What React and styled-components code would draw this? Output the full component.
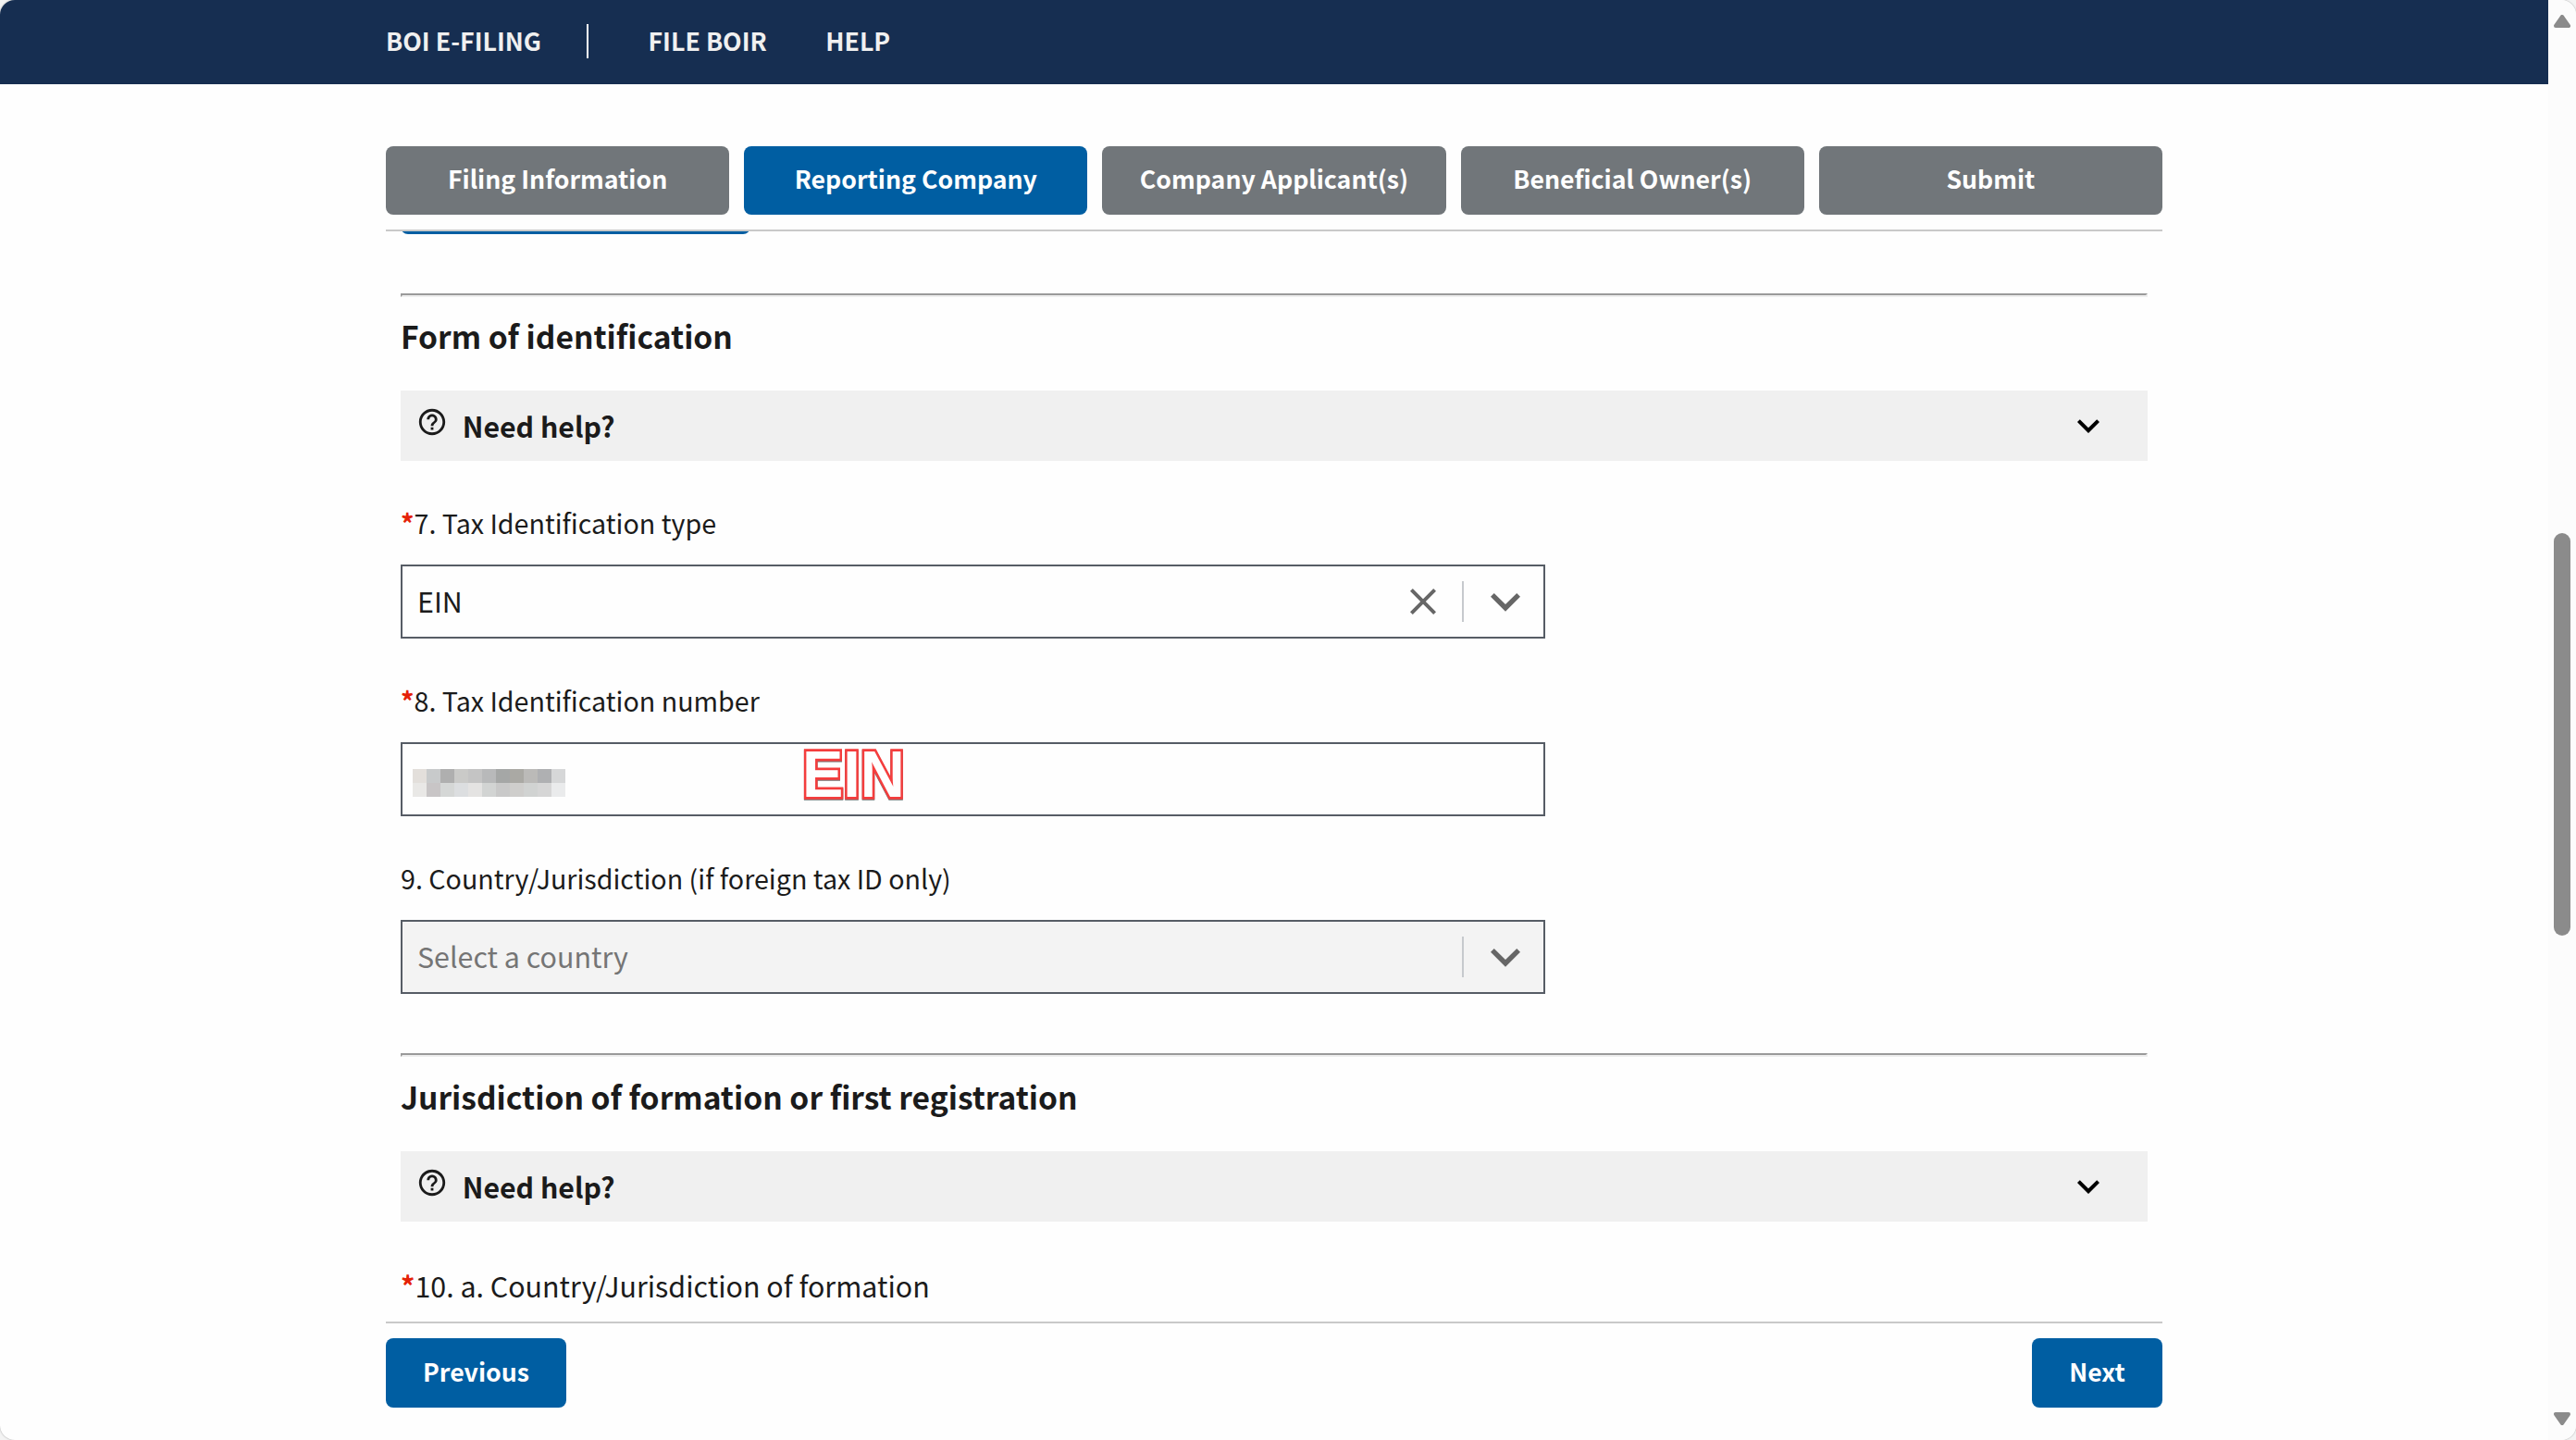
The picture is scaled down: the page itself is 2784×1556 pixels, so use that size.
import React from 'react';
import styled, { createGlobalStyle } from 'styled-components';

const GlobalStyle = createGlobalStyle`
  *, *::before, *::after { box-sizing: border-box; }
  html, body { margin: 0; padding: 0; background: #f3f3f3; overflow: hidden; }
  body {
    font-family: "Noto Sans CJK SC", "Noto Sans", sans-serif;
    color: #1b1b1b;
  }
  button { font-family: inherit; border: 0; margin: 0; padding: 0; cursor: pointer; }
`;

const Window = styled.div`
  display: flex;
  width: 100vw;
  height: 1556px;
  border-radius: 16px;
  overflow: hidden;
  background: #fefefe;
  box-shadow: 0 0 2px rgba(0, 0, 0, 0.35);
`;

const Page = styled.div`
  flex: 1;
  min-width: 0;
  display: flex;
  flex-direction: column;
`;

const Header = styled.header`
  flex: none;
  height: 91px;
  background: #162e51;
`;

const HeaderInner = styled.nav`
  width: 1920px;
  height: 100%;
  margin: 0 auto;
  display: flex;
  align-items: center;
`;

const NavLink = styled.a`
  color: #f0f0f0;
  font-size: 26.75px;
  font-weight: 700;
  line-height: 40px;
  padding-bottom: 3px;
  white-space: nowrap;
  text-decoration: none;
  & + & { margin-left: 63.4px; }
`;

const NavDivider = styled.span`
  width: 2px;
  height: 37px;
  margin: 0 64.4px 2px 49px;
  background: #fff;
`;

const Wizard = styled.div`
  flex: 1;
  min-height: 0;
  width: 1920px;
  margin: 0 auto;
  padding-top: 67px;
  display: flex;
  flex-direction: column;
`;

const Steps = styled.div`
  flex: none;
  display: grid;
  grid-template-columns: repeat(5, 1fr);
  gap: 16px;
  padding-bottom: 16px;
  border-bottom: 2px solid #c9c9c9;
`;

const Button = styled.button`
  display: flex;
  align-items: center;
  justify-content: center;
  height: ${(p) => p.$height || 75}px;
  width: ${(p) => (p.$width ? `${p.$width}px` : 'auto')};
  padding-bottom: ${(p) => (p.$height ? 5 : 3)}px;
  border-radius: 8px;
  background: ${(p) => (p.$muted ? '#71767a' : '#005ea2')};
  color: #fff;
  font-size: 26.7px;
  font-weight: 700;
  line-height: 40px;
  white-space: nowrap;
`;

const FormScroll = styled.div`
  flex: 1;
  min-height: 0;
  overflow: hidden;
  padding: 0 16px;
`;

const ScrolledButton = styled(Button)`
  margin-top: -71px;
  margin-bottom: 64px;
`;

const Rule = styled.hr`
  height: 4px;
  margin: 0;
  border: 2px solid;
  border-color: #9a9a9a #eee #eee #9a9a9a;
`;

const Heading = styled.h3`
  margin: ${(p) => (p.$lowered ? '18.9px 0 34.5px' : '17.9px 0 35.5px')};
  font-size: 33.6px;
  font-weight: 700;
  line-height: 48px;
`;

const HelpBar = styled.div`
  height: 76px;
  padding: 0 40px 0 16.7px;
  display: flex;
  align-items: center;
  background: #f0f0f0;
`;

const HelpText = styled.span`
  flex: 1;
  font-size: 30.3px;
  font-weight: 700;
  line-height: 40px;
`;

const Icon = styled.svg`
  flex: none;
  display: block;
  width: ${(p) => p.$size}px;
  height: ${(p) => p.$size}px;
  fill: ${(p) => p.$color || '#1b1b1b'};
`;

const HelpIcon = styled(Icon)`
  margin: 0 16px 8px 0;
`;

const Fields = styled.div`
  display: flex;
  flex-direction: column;
  gap: 47px;
  padding: ${(p) => p.$top}px 0 64px;
`;

const Field = styled.div`
  width: 1237px;
`;

const Label = styled.label`
  display: block;
  margin-bottom: 25px;
  font-size: ${(p) => (p.$large ? 30.4 : 28.65)}px;
  line-height: 40px;
  white-space: nowrap;
`;

const Required = styled.span`
  color: #e52207;
  font-weight: 700;
`;

const Control = styled.div`
  position: relative;
  height: 80px;
  display: flex;
  align-items: center;
  padding: 0 9px 0 16px;
  border: 2px solid #565c65;
  background: ${(p) => (p.$disabled ? '#f3f3f3' : '#fefefe')};
`;

const Value = styled.span`
  flex: 1;
  padding-bottom: 3px;
  font-size: 30.4px;
  line-height: 40px;
  color: ${(p) => (p.$placeholder ? '#757575' : '#1b1b1b')};
`;

const Separator = styled.span`
  width: 2px;
  height: 44px;
  margin: 0 13px 0 18px;
  background: #c6c9cd;
`;

const Redaction = styled.div`
  display: grid;
  grid-template-columns: repeat(11, 15px);
  grid-auto-rows: 15px;
  margin: 7px 0 0 -5px;
`;

const Tile = styled.span`
  background: ${(p) => p.$color};
`;

const Annotation = styled.span`
  position: absolute;
  left: 432.2px;
  top: -7.4px;
  font-family: "Liberation Sans", Arial, sans-serif;
  font-size: 70px;
  font-weight: 700;
  line-height: 80px;
  color: #fefefe;
  -webkit-text-stroke: 5.4px #f43d3d;
  paint-order: stroke fill;
  filter: drop-shadow(0 1px 0.5px rgba(0, 0, 0, 0.55));
  transform: scaleX(0.95);
  transform-origin: left;
`;

const Footer = styled.footer`
  flex: none;
  height: 128px;
  padding-top: 16px;
  display: flex;
  align-items: flex-start;
  justify-content: space-between;
  border-top: 2px solid #c9c9c9;
`;

const Scrollbar = styled.div`
  flex: none;
  width: 30px;
  padding: 16px 6px;
  display: flex;
  flex-direction: column;
  background: #fcfcfc;
`;

const Thumb = styled.div`
  height: 435px;
  margin: 546px 0 auto;
  border-radius: 9px;
  background: #8b8b8b;
`;

const Arrow = styled.svg`
  flex: none;
  display: block;
  width: 18px;
  height: 14px;
  fill: #8b8b8b;
  stroke: #8b8b8b;
  stroke-width: 4;
  stroke-linejoin: round;
  transform: ${(p) => (p.$down ? 'rotate(180deg)' : 'none')};
`;

const Chevron = ({ size, color }) => (
  <Icon viewBox="0 0 24 24" $size={size} $color={color}>
    <path d="M16.59 8.59 12 13.17 7.41 8.59 6 10l6 6 6-6z" />
  </Icon>
);

const Close = () => (
  <Icon viewBox="0 0 24 24" $size={48} $color="#666">
    <path d="M19 6.41 17.59 5 12 10.59 6.41 5 5 6.41 10.59 12 5 17.59 6.41 19 12 13.41 17.59 19 19 17.59 13.41 12z" />
  </Icon>
);

const NeedHelp = () => (
  <HelpBar>
    <HelpIcon viewBox="0 0 24 24" $size={34}>
      <path d="M11 18h2v-2h-2v2zm1-16C6.48 2 2 6.48 2 12s4.48 10 10 10 10-4.48 10-10S17.52 2 12 2zm0 18c-4.41 0-8-3.59-8-8s3.59-8 8-8 8 3.59 8 8-3.59 8-8 8zm0-14c-2.21 0-4 1.79-4 4h2c0-1.1.9-2 2-2s2 .9 2 2c0 2-3 1.75-3 5h2c0-2.25 3-2.5 3-5 0-2.21-1.79-4-4-4z" />
    </HelpIcon>
    <HelpText>Need help?</HelpText>
    <Chevron size={48} color="#000" />
  </HelpBar>
);

const steps = [
  'Filing Information',
  'Reporting Company',
  'Company Applicant(s)',
  'Beneficial Owner(s)',
  'Submit',
];

const tiles = [
  '#e3dfdb', '#c8cacb', '#afafaf', '#cacac8', '#c4c4c4', '#b8b9ba',
  '#a5a7a6', '#aaa9a4', '#bbbab8', '#afb0b2', '#d6d7d8',
  '#e9e8e6', '#c8c5c6', '#d5d7d6', '#dcdee0', '#e4e3e2', '#d2d4d3',
  '#c9c9c9', '#cfcecc', '#d1d3d2', '#d6d6d6', '#eaebec',
];

export default function App() {
  return (
    <>
      <GlobalStyle />
      <Window>
        <Page>
          <Header>
            <HeaderInner>
              <NavLink>BOI E-FILING</NavLink>
              <NavDivider />
              <NavLink>FILE BOIR</NavLink>
              <NavLink>HELP</NavLink>
            </HeaderInner>
          </Header>
          <Wizard>
            <Steps>
              {steps.map((step) => (
                <Button key={step} $height={74} $muted={step !== 'Reporting Company'}>
                  {step}
                </Button>
              ))}
            </Steps>
            <FormScroll>
              <ScrolledButton $height={74} $width={378} />
              <Rule />
              <Heading>Form of identification</Heading>
              <NeedHelp />
              <Fields $top={46.8}>
                <Field>
                  <Label><Required>*</Required>7. Tax Identification type</Label>
                  <Control>
                    <Value>EIN</Value>
                    <Close />
                    <Separator />
                    <Chevron size={64} color="#666" />
                  </Control>
                </Field>
                <Field>
                  <Label><Required>*</Required>8. Tax Identification number</Label>
                  <Control>
                    <Redaction>
                      {tiles.map((color, i) => <Tile key={i} $color={color} />)}
                    </Redaction>
                    <Annotation>EIN</Annotation>
                  </Control>
                </Field>
                <Field>
                  <Label>9. Country/Jurisdiction (if foreign tax ID only)</Label>
                  <Control $disabled>
                    <Value $placeholder>Select a country</Value>
                    <Separator />
                    <Chevron size={64} color="#666" />
                  </Control>
                </Field>
              </Fields>
              <Rule />
              <Heading $lowered>Jurisdiction of formation or first registration</Heading>
              <NeedHelp />
              <Fields $top={49}>
                <Label $large><Required>*</Required>10. a. Country/Jurisdiction of formation</Label>
              </Fields>
            </FormScroll>
            <Footer>
              <Button $width={195}>Previous</Button>
              <Button $width={141}>Next</Button>
            </Footer>
          </Wizard>
        </Page>
        <Scrollbar>
          <Arrow viewBox="0 0 18 14"><path d="M9 2 16 12H2Z" /></Arrow>
          <Thumb />
          <Arrow viewBox="0 0 18 14" $down><path d="M9 2 16 12H2Z" /></Arrow>
        </Scrollbar>
      </Window>
    </>
  );
}
